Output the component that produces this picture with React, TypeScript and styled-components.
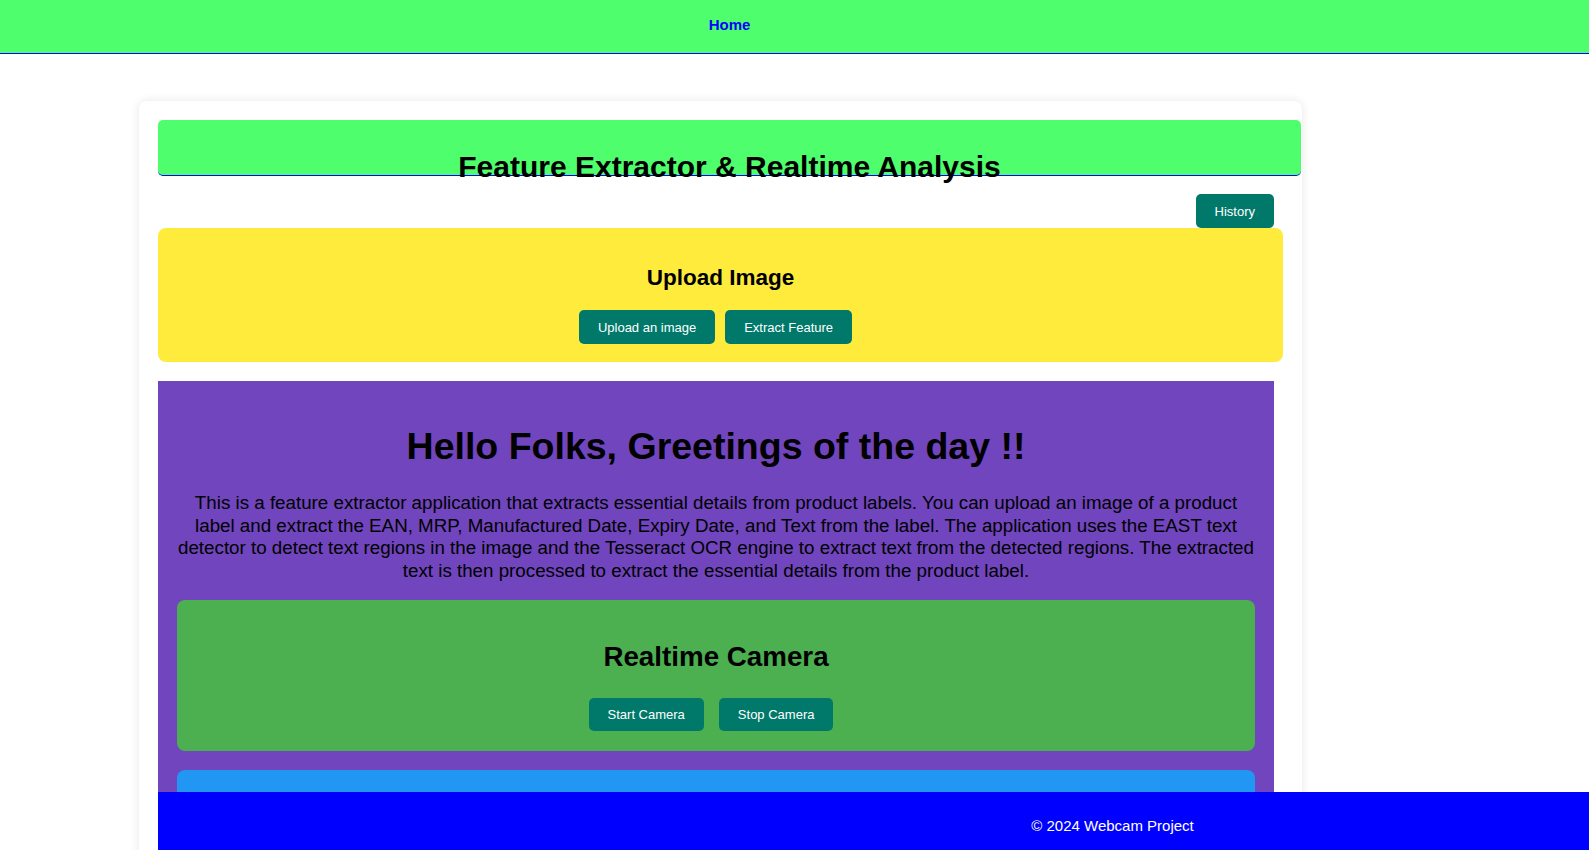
import React from "react";
import styled, { createGlobalStyle } from "styled-components";

const GlobalStyle = createGlobalStyle`
  html { scrollbar-width: none; }
  html::-webkit-scrollbar { display: none; }
  body {
    margin: 0;
    background: #ffffff;
    color: #000000;
    font-family: "Liberation Sans", Arial, sans-serif;
  }
  * { box-sizing: border-box; }
`;

const TopNav = styled.header`
  height: 54px;
  background: #4efe6c;
  border-bottom: 1px solid #0000ff;
  display: flex;
  justify-content: center;
  align-items: flex-start;
  padding: 16px 130px 0 0;
`;

const NavLink = styled.a`
  color: #0000ff;
  font-size: 15px;
  font-weight: bold;
  text-decoration: none;
  line-height: 17px;
  cursor: pointer;
`;

const Main = styled.main`
  padding: 47px 0 0 139px;
`;

const Card = styled.section`
  width: 1163px;
  padding: 19px;
  background: #ffffff;
  border-radius: 8px;
  box-shadow: 0 0 10px rgba(0, 0, 0, 0.1);
`;

const TitleBar = styled.div`
  width: calc(100% + 18px);
  height: 56px;
  padding-top: 30px;
  background: #4efe6c;
  border-bottom: 1px solid #0000ff;
  border-radius: 5px;
  text-align: center;
`;

const PageTitle = styled.h1`
  margin: 0;
  font-size: 30px;
  font-weight: bold;
  line-height: normal;
  white-space: nowrap;
`;

const ActionRow = styled.div`
  display: flex;
  justify-content: flex-end;
  margin-top: 18px;
  padding-right: 9px;
`;

const Button = styled.button<{ $h: number; $mr?: number }>`
  height: ${(p) => p.$h}px;
  margin-right: ${(p) => p.$mr ?? 0}px;
  padding: 0 19px;
  background: #00796b;
  color: #ffffff;
  border: none;
  border-radius: 5px;
  font-family: "Liberation Sans", Arial, sans-serif;
  font-size: 13px;
  line-height: 15px;
  cursor: pointer;
`;

const Panel = styled.div<{ $bg: string; $pad: string; $mt?: number; $minH?: number }>`
  background: ${(p) => p.$bg};
  padding: ${(p) => p.$pad};
  margin-top: ${(p) => p.$mt ?? 0}px;
  min-height: ${(p) => p.$minH ?? 0}px;
  border-radius: 8px;
  text-align: center;
`;

const PanelTitle = styled.h2<{ $size: number; $m: string }>`
  margin: ${(p) => p.$m};
  font-size: ${(p) => p.$size}px;
  font-weight: bold;
  line-height: normal;
`;

const ButtonRow = styled.div<{ $gap?: number }>`
  display: flex;
  justify-content: center;
  column-gap: ${(p) => p.$gap ?? 0}px;
`;

const IntroSection = styled.div`
  width: calc(100% - 9px);
  margin-top: 19px;
  padding: 19px;
  background: #7045bd;
  text-align: center;
`;

const Greeting = styled.h1`
  margin: 25px 0 24px;
  font-size: 37.5px;
  font-weight: bold;
  line-height: normal;
`;

const Intro = styled.p`
  margin: 0 0 18px;
  font-size: 18.75px;
  line-height: 22.5px;
`;

const Footer = styled.footer`
  position: fixed;
  left: 158px;
  right: 0;
  bottom: 0;
  height: 58px;
  background: #0000ff;
  color: #ffffff;
  font-size: 15px;
  line-height: 17px;
  display: flex;
  justify-content: center;
  align-items: flex-start;
  padding: 25px 0 0 478px;
`;

export default function App() {
  return (
    <>
      <GlobalStyle />
      <TopNav>
        <NavLink>Home</NavLink>
      </TopNav>
      <Main>
        <Card>
          <TitleBar>
            <PageTitle>Feature Extractor &amp; Realtime Analysis</PageTitle>
          </TitleBar>
          <ActionRow>
            <Button $h={34}>History</Button>
          </ActionRow>
          <Panel $bg="#ffeb3b" $pad="18px">
            <PanelTitle $size={22.5} $m="19px 0 19px">Upload Image</PanelTitle>
            <ButtonRow>
              <Button $h={34} $mr={10}>Upload an image</Button>
              <Button $h={34} $mr={10}>Extract Feature</Button>
            </ButtonRow>
          </Panel>
          <IntroSection>
            <Greeting>Hello Folks, Greetings of the day !!</Greeting>
            <Intro>
              This is a feature extractor application that extracts essential details from product
              labels. You can upload an image of a product label and extract the EAN, MRP,
              Manufactured Date, Expiry Date, and Text from the label. The application uses the EAST
              text detector to detect text regions in the image and the Tesseract OCR engine to
              extract text from the detected regions. The extracted text is then processed to extract
              the essential details from the product label.
            </Intro>
            <Panel $bg="#4caf50" $pad="19px 19px 20px">
              <PanelTitle $size={27.75} $m="22px 0 25px">Realtime Camera</PanelTitle>
              <ButtonRow $gap={5}>
                <Button $h={33} $mr={10}>Start Camera</Button>
                <Button $h={33} $mr={10}>Stop Camera</Button>
              </ButtonRow>
            </Panel>
            <Panel $bg="#2196f3" $pad="19px" $mt={19} $minH={150} />
          </IntroSection>
        </Card>
      </Main>
      <Footer>© 2024 Webcam Project</Footer>
    </>
  );
}
